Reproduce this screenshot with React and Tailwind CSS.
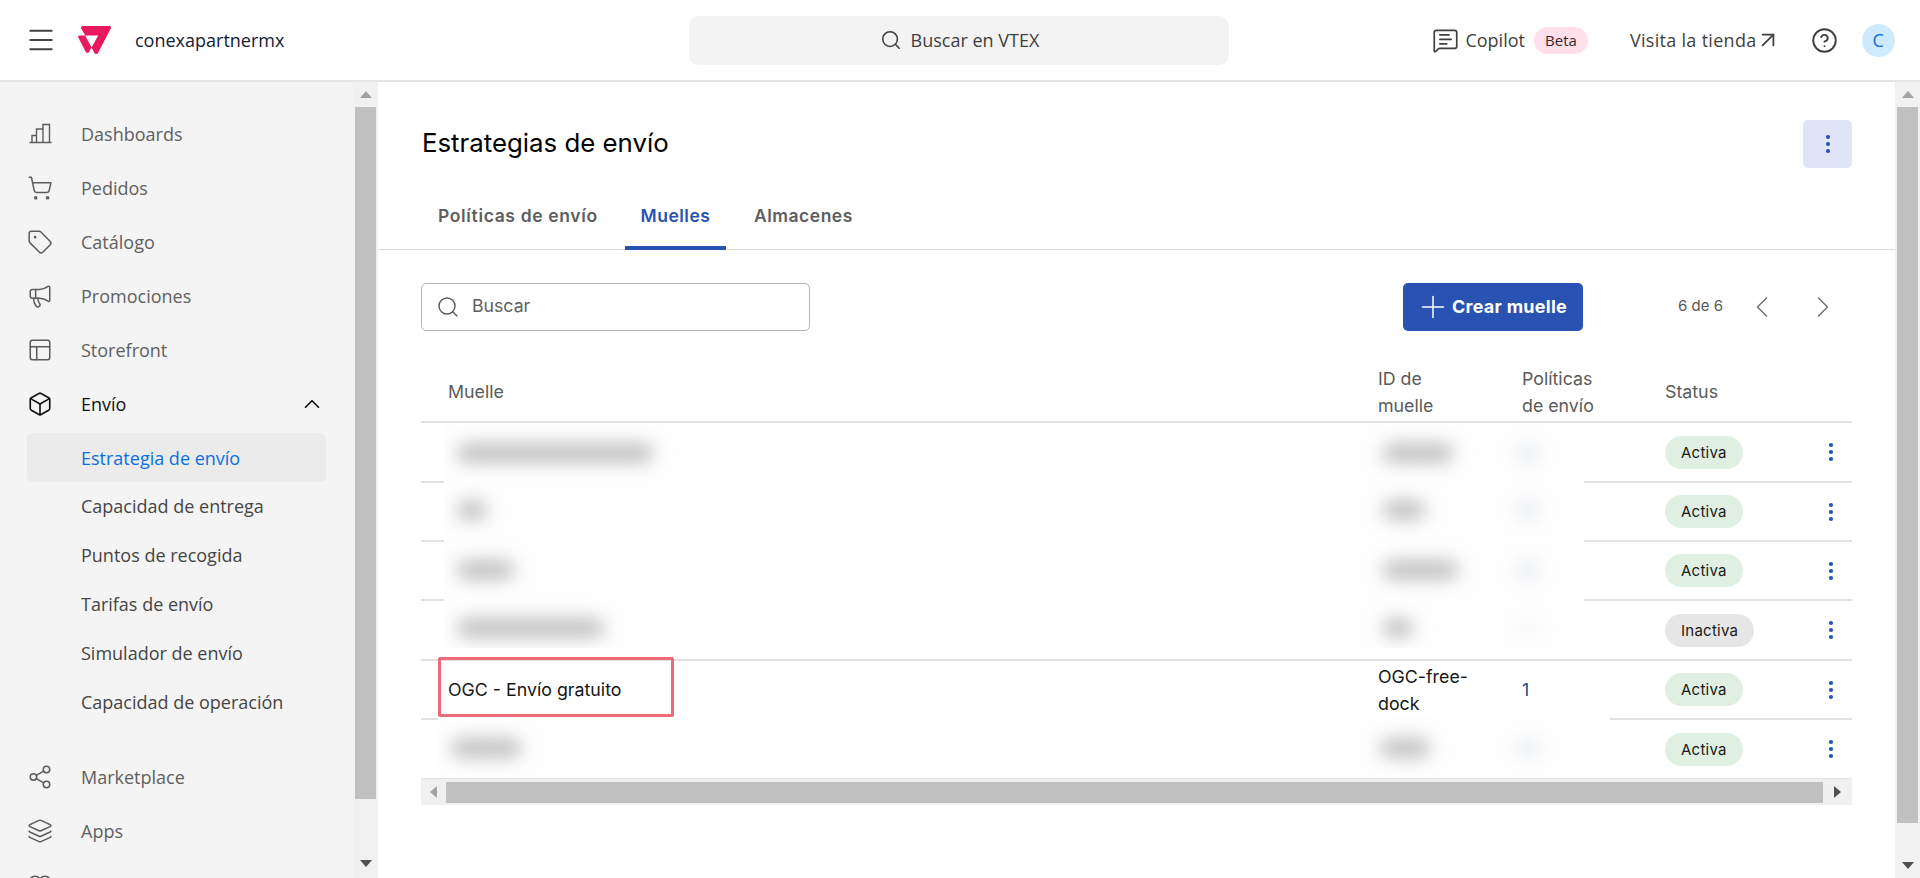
import { ChevronLeft, ChevronRight, ChevronUp, Box, Heart, HelpCircle, Layers, PanelsTopLeft, Megaphone, Menu, MessageSquareText, Plus, Search, Share2, ShoppingCart, Tag, ArrowUpRight, EllipsisVertical } from 'lucide-react';

const sans = 'font-["Open_Sans",sans-serif]';
const inter = 'font-["Inter",sans-serif]';

function BarsIcon({ className }) {
  return (
    <svg width="26" height="26" viewBox="0 0 26 26" fill="none" stroke="currentColor" strokeWidth="1.4" className={className}>
      <path d="M2.500 21.500h22M5 21.500v-7h4.500v7M9.500 21.500v-13.500h6.500v13.500M16 21.500v-18h6.500v18" />
    </svg>
  );
}

const navTop = [
  { label: 'Dashboards', Icon: BarsIcon },
  { label: 'Pedidos', Icon: ShoppingCart },
  { label: 'Catálogo', Icon: Tag },
  { label: 'Promociones', Icon: Megaphone },
  { label: 'Storefront', Icon: PanelsTopLeft },
];

const subItems = ['Capacidad de entrega', 'Puntos de recogida', 'Tarifas de envío', 'Simulador de envío', 'Capacidad de operación'];

const rows = [
  { h: 'h-[60px]', status: 'Activa' },
  { h: 'h-[59px]', status: 'Activa' },
  { h: 'h-[59px]', status: 'Activa' },
  { h: 'h-[60px]', status: 'Inactiva' },
  { h: 'h-[59px]', status: 'Activa', name: 'OGC - Envío gratuito', id: 'OGC-free-dock', count: '1' },
  { h: 'h-[60px]', status: 'Activa' },
];

// blurred-out values, one entry per hidden row
const smudges = [
  { top: 'top-[20px]', a: 'w-[196px]', b: 'w-[70px]', c: 'bg-[#e6e9f2]' },
  { top: 'top-[77px]', a: 'w-[30px]', b: 'w-[42px]', c: 'bg-[#e6e9f2]' },
  { top: 'top-[137px]', a: 'w-[57px]', b: 'w-[75px]', c: 'bg-[#e6e9f2]' },
  { top: 'top-[195px]', a: 'w-[147px]', b: 'w-[30px]', c: 'bg-[#f7f7f7]' },
];

function Smudge({ className }) {
  return <div className={`absolute h-[18px] rounded-full blur-[9px] ${className}`} />;
}

function NavItem({ label, Icon }) {
  return (
    <div className="flex h-[54px] shrink-0 items-center pl-[27px]">
      <Icon size={26} strokeWidth={1.4} className="text-[#5c5c5c]" />
      <span className={`ml-[28px] text-[18px] font-medium text-[#606060] ${sans}`}>{label}</span>
    </div>
  );
}

function ScrollArrow({ className }) {
  return <div className={`h-0 w-0 border-x-[6px] border-x-transparent ${className}`} />;
}

function Sidebar() {
  return (
    <aside className="flex h-[796px] w-[378px] shrink-0 overflow-hidden bg-[#f4f4f4]">
      <nav className="flex w-[353px] flex-col pt-[25px]">
        {navTop.map((item) => (
          <NavItem key={item.label} {...item} />
        ))}
        <div className="flex h-[54px] shrink-0 items-center pl-[27px] pr-[28px]">
          <Box size={26} strokeWidth={1.5} className="text-[#111]" />
          <span className={`ml-[28px] flex-1 text-[18px] font-medium text-[#111] ${sans}`}>Envío</span>
          <ChevronUp size={26} strokeWidth={1.6} className="text-[#111]" />
        </div>
        <div className={`mx-[27px] mt-[2px] flex h-[49px] shrink-0 items-center rounded-[5px] bg-[#ebebeb] pl-[54px] pt-[1px] text-[18px] font-medium text-[#0b6fde] ${sans}`}>
          Estrategia de envío
        </div>
        {subItems.map((label) => (
          <div key={label} className={`flex h-[49px] shrink-0 items-center pl-[81px] text-[18px] font-medium text-[#454545] ${sans}`}>
            {label}
          </div>
        ))}
        <div className="h-[23px] shrink-0" />
        <NavItem label="Marketplace" Icon={Share2} />
        <NavItem label="Apps" Icon={Layers} />
        <NavItem label="Experiencia del cliente" Icon={Heart} />
      </nav>
      <div className="flex w-[25px] flex-col items-center bg-[#f1f1f1]">
        <div className="flex h-[25px] items-center justify-center">
          <ScrollArrow className="border-b-[7px] border-b-[#a3a3a3]" />
        </div>
        <div className="h-[692px] w-[21px] bg-[#c0c0c0]" />
        <div className="flex flex-1 items-end justify-center pb-[11px]">
          <ScrollArrow className="border-t-[7px] border-t-[#505050]" />
        </div>
      </div>
    </aside>
  );
}

function Header() {
  return (
    <header className="flex h-[82px] shrink-0 items-center border-b-2 border-[#e4e4e4] bg-white">
      <Menu size={32} strokeWidth={1.5} className="ml-[25px] text-[#444]" />
      <svg width="33" height="28" viewBox="0 0 33 28" className="ml-[21px]">
        <path
          fill="#e9195f"
          fillRule="evenodd"
          d="M4.600 0H31.300c1.300 0 2.100 1.300 1.500 2.400L20 26.900c-.8 1.500-2.800 1.500-3.500 0l-2.900-5.400-2.600 4.400c-.7 1.200-2.500 1.200-3.200 0L.3 11.500c-.5-.9.100-2 1.200-2H7.200L3.200 2.400C2.600 1.300 3.400 0 4.600 0ZM7.200 9.500 13.600 21.500 20.200 9.500Z"
        />
      </svg>
      <span className={`ml-[24px] text-[18px] font-medium text-[#142032] ${sans}`}>conexapartnermx</span>
      <div className={`ml-[405px] flex h-[49px] w-[540px] items-center justify-center rounded-[10px] bg-[#f3f3f3] text-[18px] font-medium text-[#3f3f3f] ${sans}`}>
        <Search size={22} strokeWidth={1.7} className="mr-[9px] text-[#3f3f3f]" />
        Buscar en VTEX
      </div>
      <MessageSquareText size={27} strokeWidth={1.5} className="ml-[203px] text-[#3f3f3f]" />
      <span className={`ml-[6px] text-[18px] font-medium text-[#3f3f3f] ${sans}`}>Copilot</span>
      <span className={`ml-[9px] flex h-[27px] w-[54px] items-center justify-center rounded-full bg-[#ffdfe9] text-[15px] font-medium text-[#34282c] ${sans}`}>Beta</span>
      <span className={`ml-[42px] text-[18px] font-medium tracking-[0.3px] text-[#3f3f3f] ${sans}`}>Visita la tienda</span>
      <ArrowUpRight size={26} strokeWidth={1.6} className="-ml-[2px] text-[#3f3f3f]" />
      <HelpCircle size={27} strokeWidth={1.7} className="ml-[30px] text-[#3f3f3f]" />
      <div className={`ml-[24px] flex h-[33px] w-[33px] items-center justify-center rounded-full bg-[#cfe9ff] text-[18px] font-medium text-[#0b6fde] ${sans}`}>C</div>
    </header>
  );
}

function Tabs() {
  return (
    <div className={`mt-[21px] flex h-[61px] whitespace-nowrap border-b border-[#dcdcdc] pl-[32px] text-[17.5px] font-semibold tracking-[0.5px] text-[#5e5e5e] ${inter}`}>
      <div className="w-[215px] pl-[28px] pt-[14px] tracking-[0.65px]">Políticas de envío</div>
      <div className="-mb-px flex w-[101px] justify-center border-b-4 border-[#2953b2] pt-[14px] text-[#2953b2]">Muelles</div>
      <div className="pl-[28px] pt-[14px]">Almacenes</div>
    </div>
  );
}

function Toolbar() {
  return (
    <div className="mt-[32px] flex h-[49px] items-center px-[43px]">
      <div className={`flex h-[48px] w-[389px] items-center rounded-[5px] border border-[#b5b5b5] pl-[14px] text-[17.7px] text-[#606060] ${inter}`}>
        <Search size={24} strokeWidth={1.4} className="mr-[12px] text-[#5a5a5a]" />
        Buscar
      </div>
      <button className={`ml-[593px] flex h-[48px] w-[180px] items-center rounded-[5px] bg-[#2953b2] pl-[12px] text-[18px] font-bold tracking-[0.25px] text-white ${inter}`}>
        <Plus size={36} strokeWidth={1} className="mr-[1px]" />
        Crear muelle
      </button>
      <span className={`ml-[95px] w-[45px] whitespace-nowrap text-[15px] text-[#5a5a5a] ${inter}`}>6 de 6</span>
      <ChevronLeft size={36} strokeWidth={1} className="ml-[21px] text-[#707070]" />
      <ChevronRight size={36} strokeWidth={1} className="ml-[25px] text-[#707070]" />
    </div>
  );
}

function StatusPill({ status }) {
  const tone = status === 'Activa' ? 'bg-[#dff0e2]' : 'bg-[#e6e6e6]';
  return (
    <span className={`inline-flex h-[33px] items-center rounded-full px-[16px] text-[15px] font-normal tracking-[0.25px] text-[#1a1a1a] ${tone}`}>{status}</span>
  );
}

function Table() {
  return (
    <div className={`relative mx-[43px] mt-[14px] ${inter}`}>
      <div className="flex h-[78px] items-center border-b-2 border-[#e2e2e2] pt-[16px] text-[17.800px] leading-[27px] text-[#5a5a5a]">
        <div className="w-[957px] pl-[27px]">Muelle</div>
        <div className="w-[144px] pt-[1px]">ID de<br />muelle</div>
        <div className="w-[143px] pt-[1px]">Políticas<br />de envío</div>
        <div>Status</div>
      </div>
      {rows.map((row, i) => (
        <div key={i} className={`flex items-center border-b-2 border-[#e2e2e2] text-[17.8px] leading-[27px] text-[#161616] ${row.h}`}>
          <div className="w-[957px] pl-[27px]">{row.name}</div>
          <div className="w-[144px] pr-[30px]">{row.id}</div>
          <div className="w-[143px] text-[#2a4a8c]">{row.count}</div>
          <div className="flex-1">
            <StatusPill status={row.status} />
          </div>
          <EllipsisVertical size={24} strokeWidth={2.2} className="mr-[9px] text-[#2953b2]" />
        </div>
      ))}

      {/* privacy blur over the hidden rows */}
      <div className="absolute left-[23px] top-[79px] h-[224px] w-[1140px] overflow-hidden bg-[#fefefe]">
        {smudges.map((s) => (
          <div key={s.top} className={`absolute left-0 right-0 ${s.top}`}>
            <Smudge className={`left-[13px] bg-[#bbbbbb] ${s.a}`} />
            <Smudge className={`left-[939px] bg-[#bbbbbb] ${s.b}`} />
            <Smudge className={`left-[1074px] w-[20px] ${s.c}`} />
          </div>
        ))}
      </div>
      <div className="absolute left-[17px] top-[372px] h-[59px] w-[1172px] overflow-hidden bg-[#fefefe]">
        <Smudge className="left-[13px] top-[22px] w-[70px] bg-[#bbbbbb]" />
        <Smudge className="left-[942px] top-[22px] w-[50px] bg-[#bbbbbb]" />
        <Smudge className="left-[1080px] top-[22px] w-[20px] bg-[#e6e9f2]" />
      </div>

      {/* highlight round the row that matters */}
      <div className="absolute left-[17px] top-[312px] h-[60px] w-[236px] rounded-[2px] border-[3px] border-[#ee6a78]" />

      <div className="-mt-[1px] flex h-[26px] items-center bg-[#f0f0f0]">
        <div className="flex w-[25px] justify-center">
          <div className="h-0 w-0 border-y-[6px] border-r-[7px] border-y-transparent border-r-[#a3a3a3]" />
        </div>
        <div className="h-[21px] flex-1 bg-[#c0c0c0]" />
        <div className="flex w-[29px] justify-center">
          <div className="h-0 w-0 border-y-[6px] border-l-[7px] border-y-transparent border-l-[#505050]" />
        </div>
      </div>
    </div>
  );
}

export default function App() {
  return (
    <div className="flex h-[878px] w-[1920px] flex-col overflow-hidden bg-white">
      <Header />
      <div className="flex flex-1 overflow-hidden">
        <Sidebar />
        <main className="w-[1517px] shrink-0">
          <div className={`flex items-start justify-between pl-[44px] pt-[45px] ${inter}`}>
            <h1 className="text-[25.8px] leading-[32px] font-normal text-black">Estrategias de envío</h1>
            <div className="mr-[43px] -mt-[7px] flex h-[48px] w-[49px] items-center justify-center rounded-[5px] bg-[#dfe5f6]">
              <EllipsisVertical size={24} strokeWidth={2.2} className="text-[#2953b2]" />
            </div>
          </div>
          <Tabs />
          <Toolbar />
          <Table />
        </main>
        <div className="flex w-[25px] shrink-0 flex-col items-center bg-[#f1f1f1]">
          <div className="flex h-[25px] items-center justify-center">
            <ScrollArrow className="border-b-[7px] border-b-[#a3a3a3]" />
          </div>
          <div className="h-[716px] w-[21px] bg-[#c0c0c0]" />
          <div className="flex flex-1 items-end justify-center pb-[9px]">
            <ScrollArrow className="border-t-[7px] border-t-[#505050]" />
          </div>
        </div>
      </div>
    </div>
  );
}
